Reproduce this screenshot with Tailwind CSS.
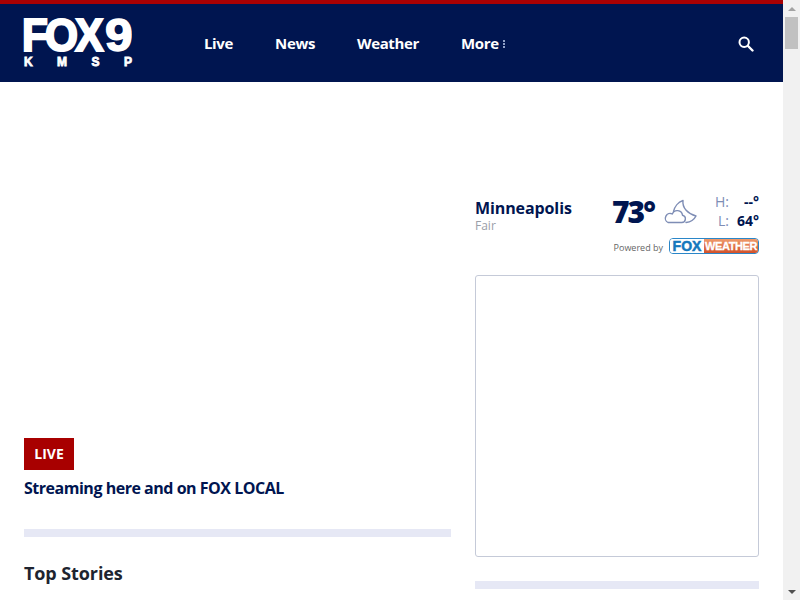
<!DOCTYPE html>
<html lang="en">
<head>
	<meta charset="UTF-8">
	<meta name="viewport" content="width=device-width, initial-scale=1.0">
	<title>FOX 9 KMSP</title>
	<script src="https://cdn.jsdelivr.net/npm/@tailwindcss/browser@4"></script>
</head>
<body class="bg-white overflow-hidden font-['Open_Sans',sans-serif]">
	<div class="flex h-[600px] overflow-hidden">
		<div class="w-[783px] shrink-0 overflow-hidden">
			<!-- Navbar -->
			<header class="h-[82px] bg-[#001550] border-t-4 border-[#a80103] flex items-center pl-[24px] pr-[28px]">
				<a href="#" class="w-[109px] shrink-0 flex flex-col text-white">
					<span class="h-[34px] flex items-center whitespace-nowrap font-['Liberation_Sans',sans-serif] font-bold text-[46px] leading-[34px] tracking-[-3px]">
						<span class="inline-block w-[81px] -ml-[2px] origin-left scale-x-[0.92] [-webkit-text-stroke:2.2px_white]">FOX</span>
						<span class="inline-block ml-[2px] origin-left scale-x-[1.08] [-webkit-text-stroke:1.5px_white]">9</span>
					</span>
					<span class="mt-[5px] h-[11px] flex justify-between pr-[1px] font-['Liberation_Sans',sans-serif] font-bold text-[12px] leading-[11px] [-webkit-text-stroke:0.8px_white]">
						<span>K</span><span>M</span><span>S</span><span>P</span>
					</span>
				</a>
				<nav class="ml-[71px] flex items-center gap-[42px] text-[15px] font-bold tracking-[-0.35px] text-white">
					<a href="#">Live</a>
					<a href="#">News</a>
					<a href="#">Weather</a>
					<a href="#" class="flex items-center gap-[4px]">More
						<span class="flex flex-col gap-[1px] mt-[1px]">
							<i class="block w-[2px] h-[2px] bg-[#8fa0c8]"></i>
							<i class="block w-[2px] h-[2px] bg-[#8fa0c8]"></i>
							<i class="block w-[2px] h-[2px] bg-[#8fa0c8]"></i>
						</span>
					</a>
				</nav>
				<button class="ml-auto mr-[1px] mt-[1px] text-white" aria-label="Search">
					<svg class="block w-[16px] h-[16px]" viewBox="0 0 16 16" fill="none" stroke="currentColor">
						<circle cx="6.200" cy="6.200" r="4.700" stroke-width="2"/>
						<path d="M10 10 14.500 14.500" stroke-width="2.400" stroke-linecap="round"/>
					</svg>
				</button>
			</header>

			<!-- Content -->
			<main class="flex gap-[24px] px-[24px]">
				<section class="w-[427px] shrink-0 pt-[356px]">
					<span class="flex w-[50px] h-[32px] pb-[1px] items-center justify-center bg-[#a80000] text-white text-[14px] font-bold">LIVE</span>
					<h2 class="mt-[7px] text-[16px] leading-[22px] font-bold tracking-[-0.48px] text-[#001550]">Streaming here and on FOX LOCAL</h2>
					<div class="mt-[30px] h-[8px] bg-[#e6e8f5]"></div>
					<h2 class="mt-[23px] text-[18px] leading-[26px] font-bold tracking-[-0.1px] text-[#1e2430]">Top Stories</h2>
				</section>

				<aside class="w-[284px] shrink-0 pt-[114px]">
					<!-- Weather -->
					<div class="h-[42px] flex">
						<div class="w-[138px] shrink-0">
							<div class="text-[16px] leading-[24px] font-bold tracking-[-0.1px] text-[#001550]">Minneapolis</div>
							<div class="text-[12px] leading-[12px] text-[#9a9ea8]">Fair</div>
						</div>
						<div class="w-[50px] shrink-0 -ml-[1px] mr-[1px] text-[30px] leading-[32px] font-extrabold tracking-[-2px] text-[#001550]">73°</div>
						<svg class="block mt-[3px] w-[35px] h-[26px] shrink-0" viewBox="0 0 35 26" fill="none" stroke="#7e8db5" stroke-width="1.400" stroke-linejoin="round" stroke-linecap="round">
							<path d="M5 23.500h13.500a3.700 3.700 0 0 0 1-7.300 5.300 5.300 0 0 0-10.200-1.200A4.400 4.400 0 0 0 5 23.500Z"/>
							<path d="M20 1.500C19 9 25 15 33 17c-2 4-5.500 6-10 6.500M20 1.500C15 3 11.500 8 10.500 12.500"/>
						</svg>
						<div class="ml-auto w-[44px] -mt-[4px] text-[14px] leading-[19px] h-[38px]">
							<div class="flex justify-between"><span class="text-[#7e8db5]">H:</span><span class="font-bold text-[#001550]">--°</span></div>
							<div class="flex justify-between pl-[3px]"><span class="text-[#7e8db5]">L:</span><span class="font-bold text-[#001550]">64°</span></div>
						</div>
					</div>
					<div class="h-[17px] flex items-center justify-end gap-[6px]">
						<span class="mt-[3px] text-[9px] text-[#666]">Powered by</span>
						<span class="-mt-[1px] w-[90px] h-[16px] flex rounded-[4px] overflow-hidden border border-[#2a86c8] font-['Liberation_Sans',sans-serif] font-bold text-[14px] leading-[14px]">
							<span class="w-[34px] text-center bg-white text-[#1578bd] [-webkit-text-stroke:0.5px_#1578bd]">FOX</span>
							<span class="flex-1 text-center whitespace-nowrap text-[11px] tracking-[-0.4px] bg-gradient-to-b from-[#ef9a6b] to-[#d2512a] text-white [-webkit-text-stroke:0.3px_white]">WEATHER</span>
						</span>
					</div>
					<!-- Ad card -->
					<div class="mt-[20px] h-[282px] border border-[#c5cad8] rounded-[3px]"></div>
					<div class="mt-[24px] h-[8px] bg-[#e6e8f5]"></div>
				</aside>
			</main>
		</div>

		<!-- Scrollbar -->
		<div class="w-[17px] shrink-0 bg-[#f1f1f1] flex flex-col items-center">
			<div class="h-[17px] flex items-center justify-center">
				<div class="w-0 h-0 border-x-[4px] border-x-transparent border-b-[4px] border-b-[#a3a3a3]"></div>
			</div>
			<div class="w-[13px] h-[32px] bg-[#c1c1c1]"></div>
			<div class="mt-auto h-[17px] flex items-center justify-center">
				<div class="w-0 h-0 border-x-[4px] border-x-transparent border-t-[4px] border-t-[#505050]"></div>
			</div>
		</div>
	</div>
</body>
</html>
